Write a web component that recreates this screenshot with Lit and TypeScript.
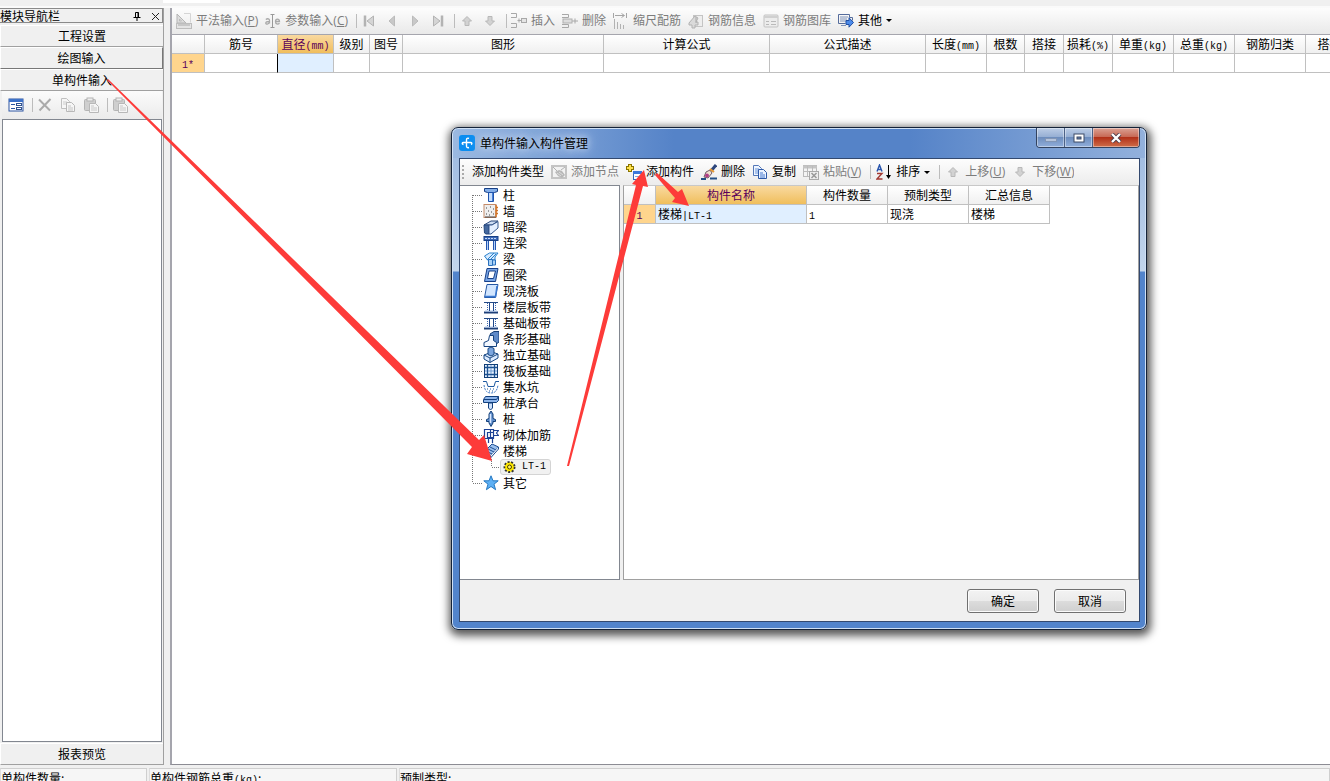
import { LitElement, html, svg, css, nothing } from "lit";
import { customElement, property } from "lit/decorators.js";
import { classMap } from "lit/directives/class-map.js";

const ruler = svg`<path d="M1 1l9 9H1z" fill="#ddd" stroke="#b5b5b5"/><path d="M3.500 6v2h2z" fill="#fff" stroke="#bbb"/><rect x=".5" y="10.500" width="15" height="5" fill="#e4e4e4" stroke="#bdbdbd"/><path d="M3 11v2M5 11v2M7 11v2M9 11v2M11 11v2M13 11v2" stroke="#aaa"/><path d="M8 .5h6.500v9" fill="none" stroke="#d5d5d5"/>`;
const page = svg`<path d="M1.500 1.500h5l3 3v7h-8z" fill="#f6f6f6" stroke="#c0c0c0"/><path d="M3 5h4M3 7h5" stroke="#ccc"/><path d="M6.500 5.500h5l3 3v6h-8z" fill="#f6f6f6" stroke="#b8b8b8"/><path d="M8 9h3M8 11h5M8 13h5" stroke="#c4c4c4"/>`;
const paste = svg`<rect x="1.500" y="2.500" width="11" height="11" rx="1" fill="#cfcfcf" stroke="#b4b4b4"/><rect x="4" y="1" width="6" height="3" fill="#eee" stroke="#b4b4b4"/><path d="M6.500 6.500h6l3 3v6h-9z" fill="#f5f5f5" stroke="#b8b8b8"/><path d="M8 9h3M8 11h6M8 13h6" stroke="#c8c8c8"/>`;
const band = svg`<path d="M1 3.500h14" stroke="#244a86"/><path d="M1 13.500h14" stroke="#1d3f78" stroke-width="2"/><path d="M2 12h12" stroke="#a9c4ea"/><path d="M4.500 4v8M12.500 4v8" stroke="#3d68ae" stroke-dasharray="1 1"/><path d="M6.500 4v8M10.500 4v8" stroke="#20488c"/>`;

const ICONS: Record<string, unknown> = {
  ruler,
  page,
  paste,
  band,
  param: svg`<path d="M5.500 1.500h4M5.500 14.500h4M7.500 1.500v13" stroke="#999"/><path d="M.800 6.500c2-1.500 3.700-.5 3.700 1v3M4.500 8.500C2 8.500.800 9 .800 10.200c0 1.300 2.700 1.300 3.700-.7M10.500 8.500h4c0-3.300-4-3.300-4 0 0 2.800 2.500 3.200 4 1.700" fill="none" stroke="#a9a9a9" stroke-width="1.300"/>`,
  first: svg`<path d="M4 2.500v11" stroke="#b3b3b3" stroke-width="2.500"/><path d="M12.500 3v10L6 8z" fill="#d5d5d5" stroke="#b3b3b3"/>`,
  prev: svg`<path d="M10.500 3v10L5 8z" fill="#c8c8c8" stroke="#bbb"/>`,
  next: svg`<path d="M5.500 3v10L11 8z" fill="#c8c8c8" stroke="#bbb"/>`,
  last: svg`<path d="M12 2.500v11" stroke="#b3b3b3" stroke-width="2.500"/><path d="M3.500 3v10L10 8z" fill="#d5d5d5" stroke="#b3b3b3"/>`,
  up: svg`<path d="M8 3.500l4.500 4.500h-2.500v4.500h-4V8H3.500z" fill="#d2d2d2" stroke="#b8b8b8"/>`,
  down: svg`<path d="M8 12.500l4.500-4.500h-2.500V3.500h-4V8H3.500z" fill="#d2d2d2" stroke="#b8b8b8"/>`,
  insert: svg`<path d="M0 .5h5.500v4H0M0 10.500h5.500v4H0M6.500 7.500H10M8 5.500v4" fill="none" stroke="#a8a8a8"/><rect x="10.500" y="5.500" width="5" height="4" fill="#e5e5e5" stroke="#a8a8a8"/>`,
  remove: svg`<path d="M0 1.500h6.500v3H0M0 11.500h6.500v3H0M10 8h6M13 5.500v5" fill="none" stroke="#a8a8a8"/><rect x="1" y="6" width="9" height="4" fill="#ddd" stroke="#b0b0b0"/>`,
  scale: svg`<path d="M.500 0v5M2 2.500h9M8.500.5l3 2-3 2M13.500 0v5" fill="none" stroke="#a5a5a5"/><path d="M1.500 6v10M4.500 9v7M7.500 11v5M10.500 12v4" stroke="#b2b2b2"/>`,
  info: svg`<rect x="5.500" y="2.500" width="9" height="11" fill="#eee" stroke="#c4c4c4"/><path d="M1 10l6-7 3 2-2 4h2v3H7v3H4v-3H1z" fill="#dadada" stroke="#b2b2b2"/><path d="M8 4v6" stroke="#aaa"/>`,
  library: svg`<rect x="1" y="2" width="14" height="12" rx="1" fill="#ececec" stroke="#c2c2c2"/><path d="M1 4h14" stroke="#d0d0d0" stroke-width="2"/><path d="M3 8.500h3M8 8.500h5M3 11.500h3M8 11.500h5" stroke="#b9b9b9"/>`,
  other: svg`<path d="M.500 1.500h11v3h3v3" fill="none" stroke="#556c9c"/><path d="M.500 1.500v9h7" fill="none" stroke="#556c9c"/><path d="M2 4h8M2 6h7M2 8h6M3 12.500h5" stroke="#8094ba"/><path d="M8 7.500h3V4.800l4.500 4.700-4.500 4.700v-2.700H8z" fill="#4d8bea" stroke="#2150a4"/>`,
  props: svg`<rect x="1" y="2" width="14" height="12" fill="#fff" stroke="#2c55a2"/><path d="M1 3.500h14" stroke="#3e72c8" stroke-width="3"/><path d="M3 7.500h4M3 11.500h4" stroke="#2c55a2"/><rect x="8.500" y="6.500" width="5" height="2" fill="#fff" stroke="#31528e"/><rect x="8.500" y="10.500" width="5" height="2" fill="#fff" stroke="#31528e"/>`,
  cross: svg`<path d="M2 2.500l11 11M13.500 2L2.500 13.500" stroke="#aaa" stroke-width="2"/>`,
  node: svg`<rect x="1" y="2" width="14" height="12" fill="#f2f2f2" stroke="#c4c4c4" stroke-width="2"/><path d="M2 3l4 4M14 3l-4 3" stroke="#b0b0b0" fill="none"/><path d="M4 8l4-2 3 1 3 4-3 3-4-2z" fill="#b8b8b8"/><path d="M6 9l4 3M8 8l4 3" stroke="#ddd"/>`,
  add: svg`<path d="M4 0v8M0 4h8" stroke="#8a7400" stroke-width="4"/><path d="M4 1v6M1 4h6" stroke="#ffe14a" stroke-width="2"/><rect x="7.500" y="7.500" width="8" height="8" fill="#fff" stroke="#3568bd"/><path d="M7 8.500h9" stroke="#3c78dc" stroke-width="3"/><path d="M9 12.500h5" stroke="#87a6da"/>`,
  brush: svg`<path d="M0 15h5M9 14.500h7" fill="none" stroke="#234f86" stroke-width="2"/><path d="M15 1L10 7" stroke="#2d477d" stroke-width="3"/><path d="M5 8l4-2 2 3-4 5-4-1z" fill="#efe0d0" stroke="#725d67"/><path d="M9 5l4 3" stroke="#e99b34" stroke-width="2"/><circle cx="6" cy="11.500" r="2" fill="#b13d86"/>`,
  copy: svg`<path d="M1.500 1.500h5l3 3v7h-8z" fill="#eef5ff" stroke="#5478b8"/><path d="M3 5h4M3 7h5M3 9h4" stroke="#6b94d8"/><path d="M6.500 5.500h5l3 3v6h-8z" fill="#eaf2ff" stroke="#2e5aa8"/><path d="M8 9h3M8 11h5M8 13h5" stroke="#477bd0"/>`,
  pasteGrid: svg`<rect x=".5" y="1.500" width="13" height="11" fill="#f4f4f4" stroke="#bababa"/><path d="M0 3h14" stroke="#c4c4c4" stroke-width="3"/><path d="M4.500 2v10M9.500 2v10M1 7.500h12" stroke="#bbb"/><rect x="6.500" y="7.500" width="9" height="8" fill="#eee" stroke="#aaa"/><path d="M8.500 9l5 5M13.500 9l-5 5" stroke="#999" stroke-width="1.500"/>`,
  sort: svg`<path d="M1 7.500L3.500 1 6 7.500M2 5.500h3" fill="none" stroke="#2855ad" stroke-width="1.400"/><path d="M1 9.500h5l-5 5.500h5.500" fill="none" stroke="#a33a34" stroke-width="1.400"/><path d="M12.500 1v11" stroke="#000"/><path d="M10 11h5l-2.500 4z"/>`,
  column: svg`<path d="M1.500 1.500h13v3l-3 1h-7l-3-1z" fill="#83aee8" stroke="#173f86"/><path d="M5.500 5.500h5v9h-5z" fill="#c5dcfb" stroke="#1e53ad"/><path d="M9.500 6v8" stroke="#4780d6"/>`,
  wall: svg`<rect x="1" y="1.500" width="12" height="13" fill="#eee" stroke="#c48b6a"/><path d="M3 5h1M7 4h1M10 6h1M5 8h1M8 9h1M3 11h1M6 12h1M10 11h1M2 14h11" stroke="#444"/><path d="M13 4.500h2M13 7.500h2M13 10.500h2M13 2v12" stroke="#d27427" stroke-width="1.500"/>`,
  hiddenBeam: svg`<path d="M1 6l7-4h7l-6 4z" fill="#cddcf1" stroke="#2a497d"/><path d="M1 6h5v9H3L1.500 14z" fill="#45699f" stroke="#24477c"/><path d="M6 6h3l6-3.500V9l-7 6H6z" fill="#e4efff" stroke="#36588d"/>`,
  linkBeam: svg`<rect x="1" y="1.500" width="14" height="4" fill="#3c68b5" stroke="#173f86"/><path d="M2 3.500h12" stroke="#c3d8f8" stroke-dasharray="2 1"/><path d="M4.500 6v9M11.500 6v9" stroke="#2356b0" stroke-width="3"/><path d="M4.500 6v9M11.500 6v9" stroke="#b8d2f8"/>`,
  beam: svg`<path d="M1.500 5l5-3h8.500l-3 4v3H4.500z" fill="#d7ebff" stroke="#2a81cc"/><path d="M4 9l7-7M7 9l6-6" stroke="#2a81cc"/><path d="M5.500 8.500h4v6h-4zM9.500 9h3v5h-3" fill="#a9d2f7" stroke="#2a70bd"/>`,
  ringBeam: svg`<path d="M4 1.500h11L12.500 14.500h-11z" fill="#79a6e6" stroke="#163f88"/><path d="M6 4h6.500L10.500 11.500H4.500z" fill="#fff" stroke="#163f88"/>`,
  slab: svg`<path d="M4 1.500h11L12.500 14.500h-11z" fill="#d2e6ff" stroke="#2557a4"/><path d="M2 13.500h10.500L14 3" fill="none" stroke="#3978d0" stroke-width="1.500"/>`,
  strip: svg`<path d="M7 3l4-2.500h5V11l-4 3z" fill="#5f8ac8" stroke="#173f77"/><path d="M6.500 4.500h4v5l3 2v4H1v-4l4.500-2z" fill="#f3f8ff" stroke="#14427f"/>`,
  isolated: svg`<path d="M1 8l8-3 6 2v4l-8 4.500L1 12z" fill="#dcebff" stroke="#164682"/><path d="M1 8l6 3 8-4M7 11v4.500" fill="none" stroke="#164682"/><path d="M5 1.500l3-1.500 3 1.500v6L8 9 5 7.500z" fill="#7ba5dd" stroke="#164682"/>`,
  raft: svg`<rect x="1.500" y="1.500" width="13" height="13" fill="#e8f2ff" stroke="#123f78"/><path d="M4.500 2v12M11.500 2v12M2 4.500h12M2 11.500h12" stroke="#1c5190" stroke-width="1.300"/><path d="M8 5v6M5 8h6M8 2v2M8 12v2M2 8h2M12 8h2" stroke="#6f9bd0"/>`,
  pit: svg`<path d="M0 2.500h3.500l1.500 5h6l1.500-5H16" fill="none" stroke="#1c58a0"/><path d="M1 6c1 7 4 8 7 8s6-1 7-8" fill="none" stroke="#3c78c4" stroke-dasharray="2 1"/><path d="M4 10h1M7 10h1M10 10h1M6 12h1M9 12h1" stroke="#1c58a0"/>`,
  cap: svg`<path d="M.500 4.500l2-3h13v4l-2 2H.500z" fill="#8cb4ea" stroke="#12407e"/><path d="M1 4.500h12.500l2-3" fill="none" stroke="#12407e"/><path d="M5.500 8h4v5l-2 2-2-2z" fill="#cde1fb" stroke="#12407e"/>`,
  pile: svg`<path d="M8 0l2 3v4.500l2.500 1v2H10V12l-2 3.500L6 12v-1.500H3.500v-2l2.500-1V3z" fill="#5f8dcb" stroke="#123f78"/><path d="M7.500 3v9" stroke="#d9e8ff" stroke-width="1.500"/>`,
  masonry: svg`<path d="M1.500 2.500h9v9h-9zM4.500 5.500h6v5h-6zM10 3.500h5.500l-2 2.500 2 2.500H10M5.500 12v4M9.500 12v4M7.500 2v8" fill="none" stroke="#1c4194" stroke-width="1.200"/>`,
  stair: svg`<path d="M1 9l8-8 6.500 3-8 9z" fill="#9bc0ee" stroke="#1c4b90"/><path d="M3 8l6 3M5 6l6 3M7 4l6 3" stroke="#1c4b90"/><path d="M7.500 13v2l8-9V4" fill="#fff" stroke="#1c4b90"/>`,
  star: svg`<path d="M8 .8l2 5h5.200l-4.200 3.400 1.600 5.500L8 11.500l-4.600 3.200L5 9.200.8 5.800H6z" fill="#5eb0f4" stroke="#2679c2"/>`,
  gear: svg`<circle cx="6.500" cy="8" r="5" fill="#ffe800" stroke="#333" stroke-width="2" stroke-dasharray="2 1.500"/><circle cx="6.500" cy="8" r="4" fill="#ffe800"/><circle cx="6.500" cy="8" r="2" fill="#fff36a" stroke="#4b4200"/>`,
};

const icon = (name: string) =>
  html`<svg class="icon" width="16" height="16" viewBox="0 0 16 16" aria-hidden="true">${ICONS[name]}</svg>`;

/** Sets half-width runs in the monospaced face used beside the Chinese glyphs. */
const mixed = (text: string) =>
  text.split(/([\x20-\x7e]+)/).map((part) => (/^[\x20-\x7e]+$/.test(part) ? html`<span class="mono">${part}</span>` : part));

const shared = css`
  * { box-sizing: border-box; }
  button { font: inherit; color: inherit; background: none; border: 0; padding: 0; margin: 0; white-space: nowrap; }
  .icon { flex: none; display: block; }
  .mono { font-family: "Liberation Mono", monospace; font-size: 10px; line-height: 0; }
  table { border-collapse: separate; border-spacing: 0; table-layout: fixed; line-height: 16px; background: #fff; }
  th, td { height: 19px; padding: 0 2px; border-right: 1px solid #c0c0c0; border-bottom: 1px solid #c0c0c0; white-space: nowrap; overflow: hidden; font-weight: 400; text-align: left; }
  th { text-align: center; padding: 0; background: linear-gradient(#fff, #f0f0f0); }
  th.hot { color: #5a005a; background: linear-gradient(#f9d9a0, #f0be5c); }
  th.index { color: #5a005a; background: #ffd58d; }
  td.active { background: #e0efff; }
`;

interface Tool { icon?: string; label?: string; key?: string; on?: boolean; menu?: boolean; sep?: boolean }

@customElement("tool-strip")
class ToolStrip extends LitElement {
  @property({ attribute: false }) tools: Tool[] = [];
  static styles = [shared, css`
    :host { display: flex; align-items: center; gap: 7px; min-width: 0; overflow: hidden; font-family: "Open Sans", "Noto Sans CJK SC", sans-serif; font-size: 12px; line-height: 16px; }
    button { display: flex; align-items: center; gap: 4px; flex: none; color: #000; }
    button:disabled { color: #7c7c7c; }
    i { flex: none; width: 1px; height: 14px; margin: 0 -3px 0 1px; background: #bcbcbc; }
    :host(.wide) i { margin: 0 -2px 0 2px; }
    .caret { border: 3px solid transparent; border-top-color: #000; border-bottom: 0; }
  `];
  render() {
    return this.tools.map((t) => t.sep
      ? html`<i></i>`
      : html`<button ?disabled=${!t.on} aria-label=${t.label ?? t.icon ?? ""}>
          ${t.icon ? icon(t.icon) : nothing}
          ${t.label ? html`<span>${t.label}${t.key ? html`(<u>${t.key}</u>)` : nothing}</span>` : nothing}
          ${t.menu ? html`<span class="caret"></span>` : nothing}
        </button>`);
  }
}

const TREE: [string, string][] = [
  ["column", "柱"], ["wall", "墙"], ["hiddenBeam", "暗梁"], ["linkBeam", "连梁"], ["beam", "梁"], ["ringBeam", "圈梁"],
  ["slab", "现浇板"], ["band", "楼层板带"], ["band", "基础板带"], ["strip", "条形基础"], ["isolated", "独立基础"],
  ["raft", "筏板基础"], ["pit", "集水坑"], ["cap", "桩承台"], ["pile", "桩"], ["masonry", "砌体加筋"], ["stair", "楼梯"], ["star", "其它"],
];

@customElement("component-dialog")
class ComponentDialog extends LitElement {
  static styles = [shared, css`
    :host { display: flex; flex-direction: column; padding: 0 6px 7px 7px; border: 1px solid #142238; border-radius: 7px;
      background: linear-gradient(90deg, #9bb9e1, #5583c8 32%, #5583c8 66%, #93b1dc) top / 100% 30px no-repeat,
        linear-gradient(#9ab7df, #c2d5ec 143px, #5284cc 144px);
      box-shadow: inset 0 0 0 1px #cfe0f5, 1px 3px 9px 3px rgba(0, 0, 0, .65); font-size: 12px; line-height: 16px; }
    header { display: flex; align-items: center; height: 30px; flex: none; }
    .logo { flex: none; margin: 0 5px 0 0; }
    h2 { flex: 1; margin: 0; font-size: 12px; font-weight: 400; }
    h2 span { text-shadow: 0 0 6px #c3d5ee, 0 0 10px #c3d5ee, 0 0 14px #c3d5ee; }
    .caption { display: flex; align-self: flex-start; height: 20px; border: 1px solid #33435f; border-top: 0; border-radius: 0 0 4px 4px; overflow: hidden; }
    .caption button { display: grid; place-items: center; width: 28px; background: linear-gradient(#bccde6, #95aed3 48%, #6d8dbd 50%, #91aedb); border-right: 1px solid #4c6186; box-shadow: inset 0 0 0 1px rgba(255, 255, 255, .4); }
    .caption button:last-child { width: 46px; border: 0; background: linear-gradient(#dba294, #c76753 48%, #b23119 50%, #cf6d49); }
    .body { flex: 1; min-height: 0; display: flex; flex-direction: column; background: #f0f0f0; border: 1px solid #33496f; }
    .bar { display: flex; align-items: center; height: 26px; flex: none; background: linear-gradient(#fdfdfd, #ececec); }
    .grip { width: 2px; height: 14px; margin: 0 8px 0 2px; background: repeating-linear-gradient(#aaa 0 2px, transparent 2px 4px); }
    .split { flex: 1; min-height: 0; display: flex; gap: 3px; }
    .tree { width: 160px; flex: none; padding: 1px 0; margin: 0; list-style: none; background: #fff; border: 1px solid #828790; border-left: 0; }
    .tree ul { list-style: none; padding: 0; margin: 0; }
    .row { display: flex; align-items: center; height: 16px; }
    .row > span { margin-left: 4px; }
    .leaf { display: flex; align-items: center; gap: 3px; height: 16px; width: 51px; padding-left: 2px; background: #f1f1f1; border: 1px solid #d4d4d4; border-radius: 3px; }
    .grid { flex: 1; min-width: 0; background: #fff; border: 1px solid #a0a0a0; border-top-color: #c8c8c8; }
    footer { display: flex; justify-content: flex-end; align-items: center; gap: 15px; height: 41px; flex: none; padding-right: 13px; }
    footer button { width: 72px; height: 24px; border: 1px solid #707070; border-radius: 3px; background: linear-gradient(#f3f3f3, #ebebeb 49%, #dcdcdc 51%, #cfcfcf); box-shadow: inset 0 0 0 1px #fbfbfb; }
  `];
  tools: Tool[] = [
    { label: "添加构件类型", on: true }, { icon: "node", label: "添加节点" }, { icon: "add", label: "添加构件", on: true },
    { icon: "brush", label: "删除", on: true }, { icon: "copy", label: "复制", on: true }, { icon: "pasteGrid", label: "粘贴", key: "V" },
    { sep: true }, { icon: "sort", label: "排序", on: true, menu: true }, { sep: true },
    { icon: "up", label: "上移", key: "U" }, { icon: "down", label: "下移", key: "W" },
  ];
  private node([name, label]: [string, string], i: number) {
    const top = i === 0 ? 8 : 0;
    const bottom = i === TREE.length - 1 ? 8 : 16;
    const open = label === "楼梯";
    return html`<li role="treeitem">
      <div class="row">
        <svg width="23" height="16" aria-hidden="true">
          <path d="M12.500 ${top}V${bottom}M13 8.500H23" stroke="#777" stroke-dasharray="1 1" />
          ${open ? svg`<path d="M11 12h6V6z" fill="#333"/>` : nothing}
        </svg>${icon(name)}<span>${label}</span>
      </div>
      ${open ? html`<ul role="group"><li role="treeitem" aria-selected="true" class="row">
        <svg width="40" height="16" aria-hidden="true"><path d="M12.500 0V16M31.500 0V8M32 8.500H40" stroke="#777" stroke-dasharray="1 1" /></svg>
        <div class="leaf">${icon("gear")}${mixed("LT-1")}</div></li></ul>` : nothing}
    </li>`;
  }
  render() {
    return html`
      <header>
        <svg class="logo" width="16" height="16" viewBox="0 0 16 16" aria-hidden="true"><rect width="16" height="16" rx="3" fill="#0a8df0"/><path d="M10 3.500C8 2.500 7.500 4 7.500 5v6c0 1.500 1 2 2.500 1.500M4.500 9.500C2.500 9 3 7.500 4.500 7.500h7c1.500 0 2 1.500.5 2" fill="none" stroke="#fff" stroke-width="1.400"/></svg>
        <h2><span>单构件输入构件管理</span></h2>
        <div class="caption">
          <button aria-label="最小化"><svg width="12" height="10"><rect x=".5" y="5.500" width="11" height="3" fill="#b5c4dc" stroke="#8195b5"/></svg></button>
          <button aria-label="最大化"><svg width="12" height="10"><rect x="1" y="1" width="10" height="8" fill="#fff" stroke="#3d4b66"/><rect x="4" y="4" width="4" height="2" fill="#6481af" stroke="#3d4b66"/></svg></button>
          <button aria-label="关闭"><svg width="12" height="10"><path d="M2 1l8 8M10 1L2 9" stroke="#4c3a47" stroke-width="4"/><path d="M2 1l8 8M10 1L2 9" stroke="#fff" stroke-width="2.400"/></svg></button>
        </div>
      </header>
      <div class="body">
        <div class="bar"><span class="grip"></span><tool-strip class="wide" .tools=${this.tools}></tool-strip></div>
        <div class="split">
          <ul class="tree" role="tree">${TREE.map((n, i) => this.node(n, i))}</ul>
          <div class="grid">
            <table style="width:426px">
              <colgroup><col style="width:32px"><col style="width:151px"><col style="width:81px"><col style="width:81px"><col style="width:81px"></colgroup>
              <tr><th></th><th class="hot">构件名称</th><th>构件数量</th><th>预制类型</th><th>汇总信息</th></tr>
              <tr><th class="index">${mixed("1")}</th><td class="active">${mixed("楼梯|LT-1")}</td><td>${mixed("1")}</td><td>现浇</td><td>楼梯</td></tr>
            </table>
          </div>
        </div>
        <footer><button>确定</button><button>取消</button></footer>
      </div>`;
  }
}

const COLUMNS: [string, number][] = [
  ["", 33], ["筋号", 73], ["直径(mm)", 56], ["级别", 36], ["图号", 33], ["图形", 201], ["计算公式", 166], ["公式描述", 156],
  ["长度(mm)", 61], ["根数", 38], ["搭接", 39], ["损耗(%)", 49], ["单重(kg)", 61], ["总重(kg)", 61], ["钢筋归类", 71], ["搭接形式", 72],
];

@customElement("app-root")
class AppRoot extends LitElement {
  static styles = [shared, css`
    :host { display: flex; flex-direction: column; position: relative; height: 100vh; overflow: hidden; background: #f0f0f0; color: #000; font-family: "Noto Sans CJK SC", sans-serif; font-size: 12px; line-height: 16px; }
    .top { height: 8px; flex: none; border-bottom: 2px solid #fafafa; }
    .top div { width: 57px; height: 3px; margin-left: 163px; background: #fff; }
    main { flex: 1; min-height: 0; display: flex; gap: 6px; }
    nav { width: 164px; flex: none; display: flex; flex-direction: column; border-right: 1px solid #a0a0a0; }
    .title { display: flex; align-items: center; height: 15px; flex: none; margin-bottom: 2px; border: 1px solid #8a8a8a; border-left: 0; gap: 10px; padding-right: 2px; }
    .title span { flex: 1; }
    .module { height: 22px; flex: none; border: 1px solid #a0a0a0; border-top-color: #fff; border-left-color: #fff; border-right: 0; }
    .module.pressed { border-right: 1px solid #777; border-bottom-color: #777; }
    .side { height: 28px; flex: none; background: linear-gradient(#fbfbfb, #ebebeb); margin: 0 1px 0 2px; padding-left: 6px; }
    .list { flex: 1; background: #fff; border: 1px solid #828790; margin: 0 1px 1px 2px; }
    .work { flex: 1; min-width: 0; display: flex; flex-direction: column; background: #fff; border-left: 2px solid #a5a5ad; border-bottom: 1px solid #8c8c94; }
    .bar { height: 27px; flex: none; display: flex; padding: 0 0 1px 4px; background: linear-gradient(#fdfdfd, #e9e9e9); border-bottom: 1px solid #a5a5ad; }
    .sheet { overflow: hidden; }
    td.cursor { border-right-color: #000; }
    .status { display: grid; grid-template-columns: 147px 248px 1fr; gap: 2px; height: 13px; flex: none; overflow: hidden; margin-top: 3px; }
    .status > span { height: 20px; padding-top: 1px; border: 1px solid #cfcfcf; border-left-color: #ddd; background: #f6f6f6; white-space: nowrap; }
    component-dialog { position: absolute; left: 451px; top: 127px; width: 696px; height: 503px; }
    .marks { position: absolute; left: 0; top: 0; pointer-events: none; fill: #fd3b39; }
  `];
  mainTools: Tool[] = [
    { icon: "ruler", label: "平法输入", key: "P" }, { icon: "param", label: "参数输入", key: "C" }, { sep: true },
    { icon: "first" }, { icon: "prev" }, { icon: "next" }, { icon: "last" }, { sep: true }, { icon: "up" }, { icon: "down" }, { sep: true },
    { icon: "insert", label: "插入" }, { icon: "remove", label: "删除" }, { icon: "scale", label: "缩尺配筋" }, { icon: "info", label: "钢筋信息" },
    { icon: "library", label: "钢筋图库" }, { icon: "other", label: "其他", on: true, menu: true },
  ];
  sideTools: Tool[] = [{ icon: "props", on: true }, { sep: true }, { icon: "cross" }, { icon: "page" }, { icon: "paste" }, { sep: true }, { icon: "paste" }];
  render() {
    return html`
      <div class="top"><div></div></div>
      <main>
        <nav>
          <div class="title"><span>模块导航栏</span>
            <button aria-label="固定"><svg width="8" height="9"><path d="M2.500.5h3v5M2.500.5v5M5 .5v5M.500 5.500h7M4 6v3" fill="none" stroke="#000"/></svg></button>
            <button aria-label="关闭"><svg width="9" height="9"><path d="M1 1l7 7M8 1L1 8" stroke="#222"/></svg></button>
          </div>
          <button class="module">工程设置</button>
          <button class="module pressed">绘图输入</button>
          <button class="module">单构件输入</button>
          <tool-strip class="side" .tools=${this.sideTools}></tool-strip>
          <div class="list"></div>
          <button class="module">报表预览</button>
        </nav>
        <section class="work">
          <div class="bar"><tool-strip .tools=${this.mainTools}></tool-strip></div>
          <div class="sheet">
            <table style="width:${COLUMNS.reduce((sum, c) => sum + c[1], 0)}px">
              <colgroup>${COLUMNS.map((c) => html`<col style="width:${c[1]}px">`)}</colgroup>
              <tr>${COLUMNS.map(([name], i) => html`<th class=${classMap({ hot: i === 2 })}>${mixed(name)}</th>`)}</tr>
              <tr><th class="index">${mixed("1*")}</th>${COLUMNS.slice(1).map((_, i) => html`<td class=${classMap({ cursor: i === 0, active: i === 1 })}></td>`)}</tr>
            </table>
          </div>
        </section>
      </main>
      <div class="status"><span>单构件数量:</span><span>单构件钢筋总重${mixed("(kg)")}:</span><span>预制类型:</span></div>
      <component-dialog role="dialog" aria-label="单构件输入构件管理"></component-dialog>
      <svg class="marks" width="1330" height="781" aria-hidden="true">
        <path d="M107 80L108 79L479 440L484 435L492 461L467 454L472 447Z"/>
        <path d="M567 466L636 185L632 184L644 170L648 187L643 186L569 466Z"/>
        <path d="M657 173L678 192L682 189L689 206L672 202L675 198L655 175Z"/>
      </svg>`;
  }
}
